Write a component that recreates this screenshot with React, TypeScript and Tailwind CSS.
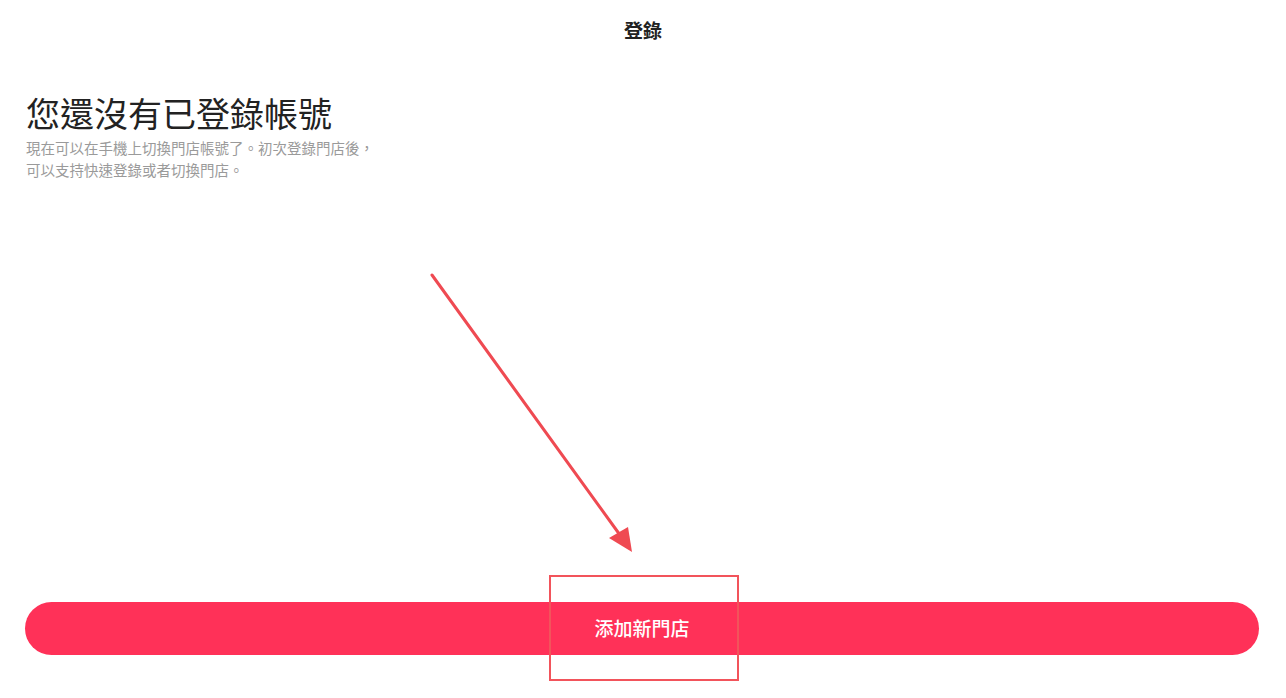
import React from "react";

const App: React.FC = () => {
    return (
        <div
            className="relative flex h-[698px] w-full flex-col bg-white text-[#222]"
            style={{ fontFamily: '"Noto Sans CJK TC", "Noto Sans", sans-serif' }}
        >
            {/* Header */}
            <div className="flex h-[58px] items-center justify-center">
                <h1 className="text-[19px] font-bold leading-none text-[#222]">登錄</h1>
            </div>

            {/* Intro */}
            <div className="px-[26px] pt-[34px]">
                <h2 className="text-[34px] font-normal leading-[42px] text-[#222]">您還沒有已登錄帳號</h2>
                <p className="mt-[3px] text-[14.5px] leading-[22px] text-[#9a9a9a]">
                    現在可以在手機上切換門店帳號了。初次登錄門店後，
                    <br />
                    可以支持快速登錄或者切換門店。
                </p>
            </div>

            {/* Button */}
            <div className="mt-auto pb-[43px] pl-[25px] pr-[27px]">
                <button className="flex h-[53px] w-full items-center justify-center rounded-full bg-[#ff3158] text-[19px] font-medium text-white">
                    添加新門店
                </button>
            </div>

            {/* Annotation: arrow + highlight box */}
            <svg
                className="pointer-events-none absolute left-0 top-0"
                width="1286"
                height="698"
                viewBox="0 0 1286 698"
            >
                <line x1="432" y1="275" x2="620" y2="535" stroke="#ef4a52" strokeWidth="3" strokeLinecap="round" />
                <polygon points="632,552 609,538 628,527" fill="#ef4a52" />
            </svg>
            <div className="pointer-events-none absolute left-[549px] top-[575px] h-[106px] w-[190px] border-[2.5px] border-[#f2545b]" />
        </div>
    );
};

export default App;
